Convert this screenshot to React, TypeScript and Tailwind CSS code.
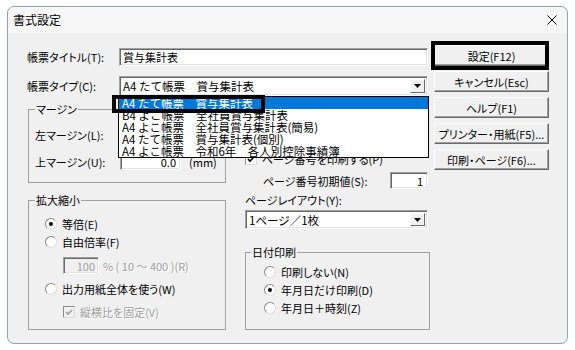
import type { ReactNode } from 'react';
import clsx from 'clsx';

// 書式設定ダイアログ（クラシックWindows風）

function Sunken({ className, disabled, children }: { className?: string; disabled?: boolean; children?: ReactNode }) {
  return (
    <div
      className={clsx(
        'flex items-center border border-t-[#a0a0a0] border-l-[#a0a0a0] border-r-white border-b-white shadow-[inset_1px_1px_0_#696969,inset_-1px_-1px_0_#e3e3e3]',
        disabled ? 'bg-[#f0f0f0]' : 'bg-white',
        className,
      )}
    >
      {children}
    </div>
  );
}

function Button({ children }: { children: ReactNode }) {
  return (
    <div className="h-[21px] flex items-center justify-center whitespace-nowrap bg-[#f0f0f0] border border-t-white border-l-white border-r-[#696969] border-b-[#696969] shadow-[inset_-1px_-1px_0_#a0a0a0]">
      {children}
    </div>
  );
}

function Combo({ className, children }: { className?: string; children: ReactNode }) {
  return (
    <Sunken className={className}>
      <span className="pl-[3px] whitespace-nowrap text-[11.5px] [font-feature-settings:normal]">{children}</span>
      <span className="ml-auto mr-[2px] w-[15px] h-[calc(100%-4px)] flex items-center justify-center bg-[#f0f0f0] border border-t-white border-l-white border-r-[#696969] border-b-[#696969]">
        <svg width="7" height="4" viewBox="0 0 7 4">
          <path d="M0 0h7L3.5 4z" fill="#000" />
        </svg>
      </span>
    </Sunken>
  );
}

function Radio({ checked }: { checked?: boolean }) {
  return (
    <span className="w-[12px] h-[12px] shrink-0 rounded-full bg-white border border-t-[#8a8a8a] border-l-[#8a8a8a] border-r-[#dcdcdc] border-b-[#dcdcdc] flex items-center justify-center">
      {checked && <span className="w-[4px] h-[4px] rounded-full bg-black" />}
    </span>
  );
}

function Check({ disabled }: { disabled?: boolean }) {
  return (
    <span
      className={clsx(
        'w-[12px] h-[12px] shrink-0 border border-t-[#8a8a8a] border-l-[#8a8a8a] border-r-[#dcdcdc] border-b-[#dcdcdc] flex items-center justify-center',
        disabled ? 'bg-[#f0f0f0]' : 'bg-white',
      )}
    >
      <svg width="8" height="7" viewBox="0 0 8 7">
        <path d="M1 3l2 2 4-4" fill="none" stroke={disabled ? '#a0a0a0' : '#000'} strokeWidth="1.6" />
      </svg>
    </span>
  );
}

const listItems = [
  'A4 たて帳票　賞与集計表',
  'B4 よこ帳票　全社員賞与集計表',
  'A4 よこ帳票　全社員賞与集計表(簡易)',
  'A4 たて帳票　賞与集計表(個別)',
  'A4 よこ帳票　令和6年　各人別控除事績簿',
];

export default function App() {
  return (
    <div className="relative w-[575px] h-[350px] overflow-hidden bg-white pt-[6px] pl-[7px] text-[11px] leading-[12px] text-black font-['Noto_Sans_CJK_JP','Noto_Sans',sans-serif] [font-feature-settings:'palt']">
      <div className="w-[561px] h-[338px] flex flex-col rounded-[7px] border border-[#8ea3b6] bg-[#f0f0f0]">
        {/* タイトルバー */}
        <div className="h-[26px] shrink-0 flex items-center justify-between pl-[5px] pr-[10px] rounded-t-[7px] bg-[#f6f6f6]">
          <span className="text-[12px]">書式設定</span>
          <svg width="10" height="10" viewBox="0 0 10 10">
            <path d="M0.5 0.5l9 9M9.5 0.5l-9 9" stroke="#000" strokeWidth="1" />
          </svg>
        </div>

        <div className="flex pl-[19px] pt-[12px]">
          {/* 左側 */}
          <div className="w-[403px] mt-[3px]">
            <div className="flex items-center h-[18px]">
              <span className="w-[92px]">帳票タイトル(T):</span>
              <Sunken className="w-[309px] h-[18px]">
                <span className="pl-[3px]">賞与集計表</span>
              </Sunken>
            </div>
            <div className="flex items-center h-[20px] mt-[10px]">
              <span className="w-[92px]">帳票タイプ(C):</span>
              <Combo className="w-[309px] h-[20px]">A4 たて帳票　賞与集計表</Combo>
            </div>

            <div className="flex mt-[7px]">
              {/* マージン・拡大縮小 */}
              <div className="ml-[1px] w-[198px]">
                <fieldset className="h-[80px] border border-[#a0a0a0] pl-[6px] pt-[11px]">
                  <legend className="px-[1px] leading-[12px]">マージン</legend>
                  <div className="flex items-center h-[17px]">
                    <span className="w-[85px]">左マージン(L):</span>
                    <Sunken className="w-[61px] h-[17px] justify-end pr-[4px]">0.0</Sunken>
                    <span className="ml-[10px]">(mm)</span>
                  </div>
                  <div className="flex items-center h-[17px] mt-[10px]">
                    <span className="w-[85px]">上マージン(U):</span>
                    <Sunken className="w-[61px] h-[17px] justify-end pr-[4px]">0.0</Sunken>
                    <span className="ml-[8px]">(mm)</span>
                  </div>
                </fieldset>

                <fieldset className="mt-[11px] h-[136px] border border-[#a0a0a0] pl-[16px] pt-[9px]">
                  <legend className="ml-[-10px] px-[1px] leading-[12px]">拡大縮小</legend>
                  <div className="flex items-center gap-[5px] h-[18px]">
                    <Radio checked />
                    <span>等倍(E)</span>
                  </div>
                  <div className="flex items-center gap-[5px] h-[18px]">
                    <Radio />
                    <span>自由倍率(F)</span>
                  </div>
                  <div className="flex items-center h-[17px] mt-[6px] ml-[18px]">
                    <Sunken disabled className="w-[36px] h-[17px] justify-end pr-[3px] text-[#a0a0a0]">100</Sunken>
                    <span className="ml-[4px] text-[#a0a0a0] [text-shadow:1px_1px_0_#fff]">% ( 10 ～ 400 )(R)</span>
                  </div>
                  <div className="flex items-center gap-[5px] h-[18px] mt-[6px]">
                    <Radio />
                    <span>出力用紙全体を使う(W)</span>
                  </div>
                  <div className="flex items-center gap-[5px] h-[18px] mt-[5px] ml-[18px]">
                    <Check disabled />
                    <span className="text-[#a0a0a0] [text-shadow:1px_1px_0_#fff]">縦横比を固定(V)</span>
                  </div>
                </fieldset>
              </div>

              {/* ページ関連 */}
              <div className="ml-[19px] w-[185px]">
                <div className="flex items-center gap-[5px] h-[18px] mt-[47px]">
                  <Check />
                  <span>ページ番号を印刷する(P)</span>
                </div>
                <div className="flex items-center h-[17px] mt-[4px]">
                  <span className="ml-[18px] w-[127px]">ページ番号初期値(S):</span>
                  <Sunken className="w-[38px] h-[17px] justify-end pr-[4px]">1</Sunken>
                </div>
                <div className="mt-[5px] h-[12px]">ページレイアウト(Y):</div>
                <Combo className="mt-[4px] w-[183px] h-[19px]">1ページ／1枚</Combo>

                <fieldset className="mt-[17px] h-[84px] border border-[#a0a0a0] pl-[18px] pt-[5px]">
                  <legend className="ml-[-13px] px-[1px] leading-[12px]">日付印刷</legend>
                  <div className="flex items-center gap-[5px] h-[18px]">
                    <Radio />
                    <span>印刷しない(N)</span>
                  </div>
                  <div className="flex items-center gap-[5px] h-[18px]">
                    <Radio checked />
                    <span>年月日だけ印刷(D)</span>
                  </div>
                  <div className="flex items-center gap-[5px] h-[18px]">
                    <Radio />
                    <span>年月日＋時刻(Z)</span>
                  </div>
                </fieldset>
              </div>
            </div>
          </div>

          {/* ボタン列 */}
          <div className="ml-[4px] w-[115px] flex flex-col gap-[5px]">
            <Button>設定(F12)</Button>
            <Button>キャンセル(Esc)</Button>
            <Button>ヘルプ(F1)</Button>
            <Button>プリンター・用紙(F5)...</Button>
            <Button>印刷・ページ(F6)...</Button>
          </div>
        </div>
      </div>

      {/* 開いたドロップダウンリスト */}
      <div className="absolute left-[118px] top-[96px] w-[311px] border border-black bg-white text-[11.5px] [font-feature-settings:normal]">
        {listItems.map((item, i) => (
          <div
            key={item}
            className={clsx('h-[12px] leading-[12px] pl-[3px] whitespace-nowrap', i === 0 && 'bg-[#0078d7] text-white')}
          >
            {item}
          </div>
        ))}
      </div>

      {/* 強調枠 */}
      <div className="absolute left-[112px] top-[95px] w-[153px] h-[18px] border-[4px] border-black" />
      <div className="absolute left-[431px] top-[41px] w-[118px] h-[29px] border-[4px] border-black" />
    </div>
  );
}
